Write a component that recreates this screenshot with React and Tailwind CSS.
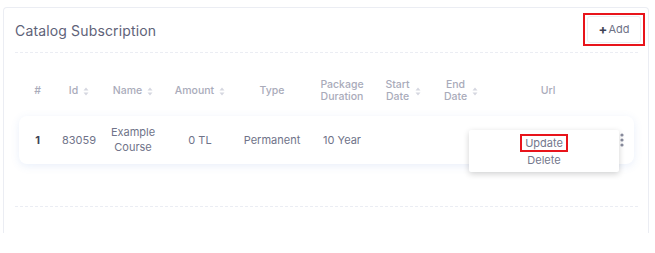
import React from "react";

const font = { fontFamily: "Inter, 'Noto Sans', sans-serif" };

function Sort() {
  return (
    <svg width="6" height="9" viewBox="0 0 6 9" className="ml-[5px] shrink-0">
      <path d="M3 0.5 L5.5 3.5 H0.5 Z" fill="#d5d7e0" />
      <path d="M3 8.5 L5.5 5.5 H0.5 Z" fill="#d5d7e0" />
    </svg>
  );
}

const cols = [
  { w: "w-[37px]", label: "#" },
  { w: "w-[46px]", label: "Id", sort: true },
  { w: "w-[62px]", label: "Name", sort: true },
  { w: "w-[72px]", label: "Amount", sort: true },
  { w: "w-[72px]", label: "Type" },
  { w: "w-[68px]", label: ["Package", "Duration"] },
  { w: "w-[54px]", label: ["Start", "Date"], sort: true },
  { w: "w-[62px]", label: ["End", "Date"], sort: true },
  { w: "w-[112px]", label: "Url" },
  { w: "w-[30px]", label: "" },
];

export default function App() {
  return (
    <div className="w-[655px] h-[253px] bg-white pt-[7px] pl-[3px]" style={font}>
      <div className="w-[646px] h-[226px] border border-b-0 border-[#ebedf3] rounded-t-[4px] pl-[11px] pr-[10px] flex flex-col">
        <div className="h-[45px] flex items-center justify-between border-b border-dashed border-[#ebedf3] shrink-0">
          <div className="text-[14px] text-[#5e6278] tracking-[0.15px]">Catalog Subscription</div>
          <div className="relative mr-[-3px] mt-[-2px]">
            <div className="h-[27px] w-[54px] justify-center flex items-center border border-[#eceef3] rounded-[3px] text-[11px] text-[#6e7286]">
              <span className="text-[13px] font-bold text-[#3f4254] mr-[1px] leading-none">+</span>Add
            </div>
            <span className="absolute left-[-4px] right-[-4px] top-[-3px] bottom-[-3px] border-2 border-[#e8141b]" />
          </div>
        </div>

        <div className="pt-[19px] px-[4px]">
          <div className="h-[38px] flex items-center text-[10.5px] font-medium text-[#a9abba] leading-[12px]">
            {cols.map((c, i) => (
              <div key={i} className={`${c.w} flex items-center justify-center text-center`}>
                {Array.isArray(c.label) ? (
                  <span className="flex flex-col">
                    <span>{c.label[0]}</span>
                    <span>{c.label[1]}</span>
                  </span>
                ) : (
                  <span>{c.label}</span>
                )}
                {c.sort && <Sort />}
              </div>
            ))}
          </div>

          <div className="relative mt-[6px] h-[48px] rounded-[8px] bg-white shadow-[0_2px_8px_rgba(82,130,215,0.13)] flex items-center text-[11px] text-[#6f7389]">
            <div className="w-[37px] text-center font-bold text-[#3f4254]">1</div>
            <div className="w-[46px] text-center">83059</div>
            <div className="w-[62px] text-center leading-[15px]">Example<br />Course</div>
            <div className="w-[72px] text-center">0 TL</div>
            <div className="w-[72px] text-center">Permanent</div>
            <div className="w-[68px] text-center">10 Year</div>
            <div className="w-[54px]" />
            <div className="w-[62px]" />
            <div className="w-[112px]" />
            <div className="w-[30px] flex justify-end pr-[10px] self-start pt-[17px]">
              <svg width="4" height="14" viewBox="0 0 4 14">
                <circle cx="2" cy="2" r="1.6" fill="#8a8d9f" />
                <circle cx="2" cy="7" r="1.6" fill="#8a8d9f" />
                <circle cx="2" cy="12" r="1.6" fill="#8a8d9f" />
              </svg>
            </div>

            <div className="absolute left-[450px] top-[14px] w-[150px] h-[42px] bg-white rounded-[2px] shadow-[0_2px_6px_rgba(0,0,0,0.18)] flex flex-col items-center pt-[5px] text-[11px] text-[#74788d] leading-[17px]">
              <div className="relative px-[4px]">
                Update
                <span className="absolute left-[-1px] right-[-1px] top-[-1px] bottom-[0px] border-2 border-[#e8141b]" />
              </div>
              <div>Delete</div>
            </div>
          </div>
        </div>

        <div className="mt-[42px] border-b border-dashed border-[#ebedf3]" />
      </div>
    </div>
  );
}
